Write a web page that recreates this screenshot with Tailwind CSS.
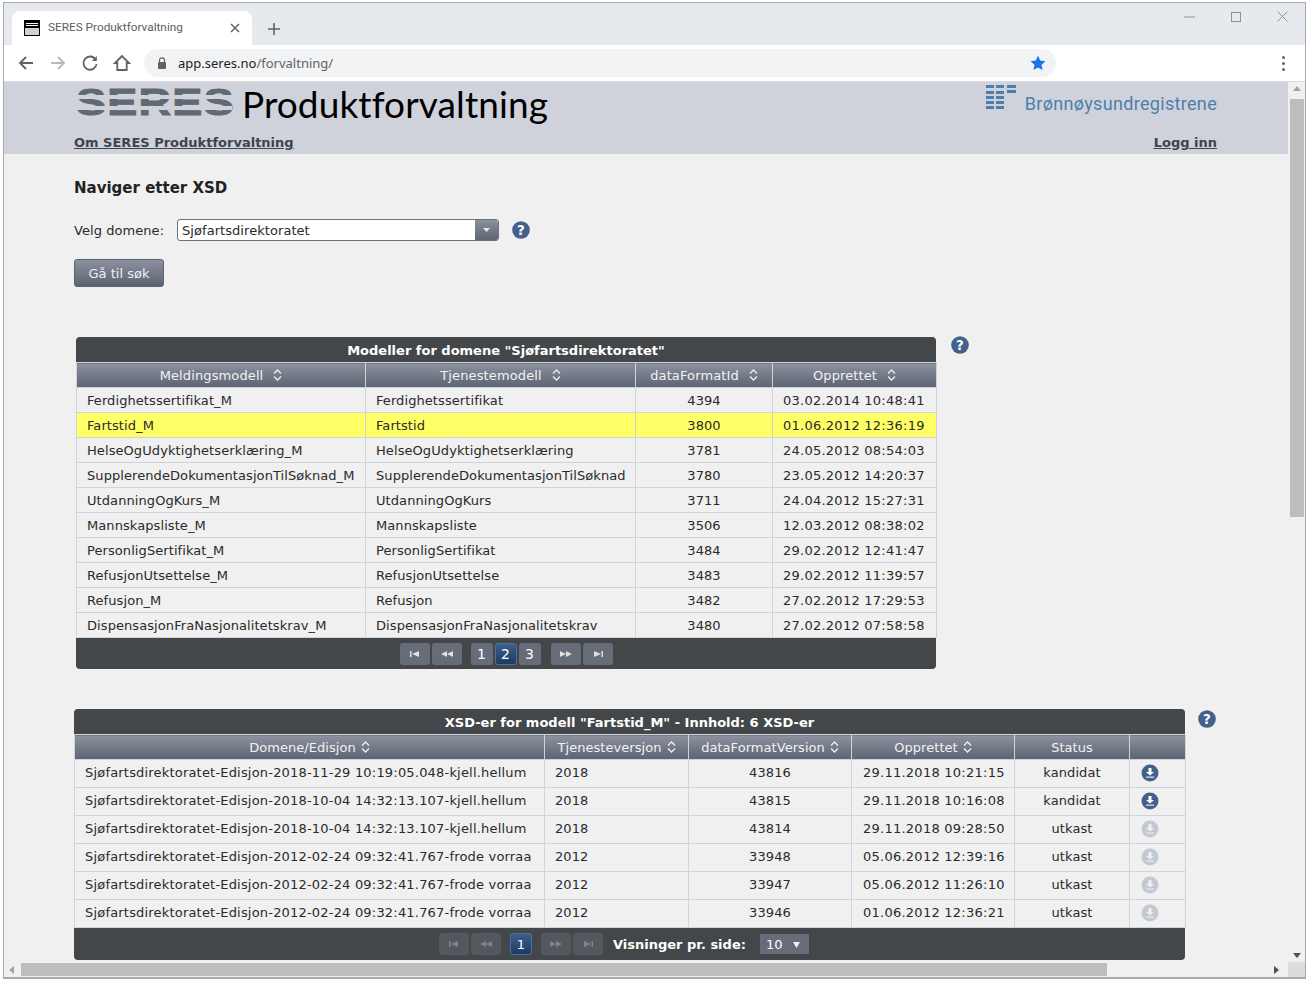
<!DOCTYPE html>
<html lang="no"><head><meta charset="utf-8"><title>SERES Produktforvaltning</title>
<script src="https://cdn.jsdelivr.net/npm/@tailwindcss/browser@4"></script></head>
<body class="w-[1306px] h-[981px] overflow-hidden bg-white font-['DejaVu_Sans',sans-serif] text-[13px] text-[#2a2a2a]">
<div class="ml-[3px] mt-[2px] w-[1303px] h-[977px] border-t-[1px] border-l-[1px] border-r-[1px] border-b-[2px] border-[#a9a9a9] flex flex-col overflow-hidden">
  <!-- tab strip -->
  <div class="h-[42px] shrink-0 bg-[#e6e9ed] flex items-end pl-[8px] relative">
    <div class="w-[240px] h-[34px] bg-white rounded-t-[8px] flex items-center pl-[12px] pr-[12px] font-['Roboto',sans-serif] text-[11.8px] text-[#5b5e63]">
      <div class="w-[16px] h-[16px] border border-black bg-[#cfcfcf] shrink-0 mr-[8px] flex flex-col gap-[1px] bg-linear-to-b from-black from-50% to-[#cfcfcf] to-50%"><i class="block mt-[2px] mx-[1px] h-[1px] bg-white"></i><i class="block mx-[1px] h-[1px] bg-white"></i></div>
      <span class="flex-1 whitespace-nowrap">SERES Produktforvaltning</span>
      <svg width="10" height="10" viewBox="0 0 10 10" class="shrink-0"><path d="M1 1l8 8M9 1l-8 8" stroke="#5f6368" stroke-width="1.5"/></svg>
    </div>
    <svg width="12" height="12" viewBox="0 0 12 12" class="ml-[16px] mb-[10px]"><path d="M6 0v12M0 6h12" stroke="#5f6368" stroke-width="1.6"/></svg>
    <div class="absolute right-[17px] top-[8px] flex items-center gap-[36px]">
      <svg width="11" height="11" viewBox="0 0 11 11"><path d="M0 6h11" stroke="#8f9194"/></svg>
      <svg width="10" height="10" viewBox="0 0 10 10"><rect x=".5" y=".5" width="9" height="9" fill="none" stroke="#8f9194"/></svg>
      <svg width="11" height="11" viewBox="0 0 11 11"><path d="M.5.5l10 10M10.5.5l-10 10" stroke="#8f9194"/></svg>
    </div>
  </div>
  <!-- toolbar -->
  <div class="h-[37px] shrink-0 bg-white border-b border-[#dadce0] flex items-center pl-[13px] pr-[20px]">
    <svg width="18" height="18" viewBox="0 0 18 18"><path d="M16 9H3M9 3L3 9l6 6" fill="none" stroke="#5f6368" stroke-width="1.8"/></svg>
    <svg width="18" height="18" viewBox="0 0 18 18" class="ml-[14px]"><path d="M2 9h13M9 3l6 6-6 6" fill="none" stroke="#b6b8bb" stroke-width="1.8"/></svg>
    <svg width="18" height="18" viewBox="0 0 18 18" class="ml-[14px]"><path d="M14.6 5.5A6.6 6.6 0 1 0 15.6 10" fill="none" stroke="#5f6368" stroke-width="1.8"/><path d="M15.8 2v5h-5z" fill="#5f6368"/></svg>
    <svg width="18" height="18" viewBox="0 0 18 18" class="ml-[14px]"><path d="M9 2L2 9h2.300v7h9.400V9H16z" fill="none" stroke="#5f6368" stroke-width="1.800"/></svg>
    <div class="ml-[13px] w-[912px] h-[28px] rounded-full bg-[#f1f3f4] flex items-center pl-[13px] pr-[10px] font-['Noto_Sans',sans-serif] text-[13px] text-[#202124]">
      <svg width="10" height="12" viewBox="0 0 10 12"><path d="M2.500 5V3.300a2.500 2.500 0 0 1 5 0V5" fill="none" stroke="#5f6368" stroke-width="1.200"/><rect x="1" y="5" width="8" height="7" rx="1" fill="#5f6368"/></svg>
      <span class="ml-[11px] flex-1 pt-[1px]">app.seres.no<span class="text-[#5f6368]">/forvaltning/</span></span>
      <svg width="16" height="16" viewBox="0 0 16 16"><path d="M8 .7l2.200 4.900 5.300.6-4 3.600 1.100 5.300L8 12.400l-4.600 2.700 1.100-5.300-4-3.600 5.300-.6z" fill="#1a73e8"/></svg>
    </div>
    <div class="ml-auto flex flex-col gap-[3px]"><i class="block w-[3px] h-[3px] rounded-full bg-[#5f6368]"></i><i class="block w-[3px] h-[3px] rounded-full bg-[#5f6368]"></i><i class="block w-[3px] h-[3px] rounded-full bg-[#5f6368]"></i></div>
  </div>
  <!-- viewport -->
  <div class="flex-1 min-h-0 flex flex-col bg-[#f0f0f0]">
    <div class="flex-1 min-h-0 flex">
      <div class="flex-1 min-w-0 overflow-hidden">
        <!-- page header -->
        <header class="h-[72px] bg-[#cfd2da] pl-[70px] pr-[71px] flex flex-col">
          <div class="h-[53px] flex">
            <div class="relative h-[27px] mt-[7px] ml-[2px] w-[156px]">
              <span class="block font-['Liberation_Sans',sans-serif] font-bold text-[36px] leading-[27px] text-[#5f6a73] [-webkit-text-stroke:1px_#5f6a73] origin-left scale-x-[1.25] tracking-[1px] whitespace-nowrap">SERES</span>
              <i class="absolute left-0 right-0 top-[6px] h-[4px] bg-[#cfd2da]"></i>
              <i class="absolute left-0 right-0 top-[17px] h-[4px] bg-[#cfd2da]"></i>
            </div>
            <span class="ml-[10px] font-['Lato',sans-serif] text-[37px] tracking-[0.1px] leading-[44px] text-black whitespace-nowrap">Produktforvaltning</span>
            <div class="ml-auto flex items-start">
              <svg width="30" height="25" viewBox="0 0 30 25" class="mt-[3px]" fill="#4d7fac"><rect x="0" y="0" width="8" height="3"/><rect x="10" y="0" width="8" height="3"/><rect x="21" y="0" width="9" height="3"/><rect x="0" y="6" width="8" height="3"/><rect x="10" y="6" width="8" height="3"/><rect x="21" y="5" width="9" height="3"/><rect x="0" y="11" width="8" height="3"/><rect x="10" y="11" width="8" height="3"/><rect x="0" y="16" width="8" height="3"/><rect x="10" y="16" width="8" height="3"/><rect x="0" y="21" width="8" height="3"/><rect x="10" y="21" width="8" height="3"/></svg>
              <span class="ml-[9px] mt-[12px] font-['Roboto',sans-serif] text-[18px] leading-[20px] tracking-[0.32px] text-[#4d7fac]">Brønnøysundregistrene</span>
            </div>
          </div>
          <div class="flex justify-between font-bold text-[13px] leading-[16px] text-[#40444c] underline"><a>Om SERES Produktforvaltning</a><a>Logg inn</a></div>
        </header>
        <main class="pl-[70px]">
          <h1 class="pt-[25px] font-bold text-[15px] leading-[18px] text-[#222]">Naviger etter XSD</h1>
          <div class="mt-[22px] flex items-center h-[22px]">
            <label class="w-[103px] pt-[2px] tracking-[0.06px]">Velg domene:</label>
            <div class="w-[322px] h-[22px] bg-white border border-[#6b7280] rounded-[3px] flex items-center pl-[4px] overflow-hidden">
              <span class="flex-1 pt-[2px] tracking-[0.06px]">Sjøfartsdirektoratet</span>
              <span class="w-[23px] h-[22px] bg-linear-to-b from-[#8c929e] to-[#5c6372] flex items-center justify-center"><svg width="7" height="4" viewBox="0 0 7 4"><path d="M0 0h7L3.500 4z" fill="#e8e8e8"/></svg></span>
            </div>
            <svg width="18" height="18" viewBox="0 0 20 20" class="ml-[13px]"><circle cx="10" cy="10" r="9.800" fill="#44618c"/><text x="10" y="15.500" text-anchor="middle" font-family="DejaVu Sans" font-weight="700" font-size="15" fill="#fff">?</text></svg>
          </div>
          <button class="mt-[18px] block w-[90px] h-[28px] pt-[2px] rounded-[3px] border border-[#5c6372] bg-linear-to-b from-[#8c929e] to-[#5c6372] text-[#f0f0f0] text-[13px]">Gå til søk</button>

          <!-- table 1 -->
          <div class="mt-[50px] ml-[2px] flex items-start">
            <div class="w-[860px] shrink-0">
              <div class="h-[25px] pt-[2px] bg-[#43474a] rounded-t-[4px] text-white font-bold flex items-center justify-center">Modeller for domene "Sjøfartsdirektoratet"</div>
              <table class="w-[860px] table-fixed border-collapse [&_th]:h-[25px] [&_th]:pt-[2px] [&_th]:tracking-[0.12px] [&_th]:font-normal [&_th]:text-[#f2f2f2] [&_th]:bg-linear-to-b [&_th]:from-[#8c929e] [&_th]:to-[#5c6372] [&_th]:border [&_th]:border-[#d0d3db] [&_td]:h-[25px] [&_td]:p-0 [&_td]:pl-[10px] [&_td]:pt-[2px] [&_td]:tracking-[0.08px] [&_td]:border [&_td]:border-[#d0d3db] [&_td]:whitespace-nowrap">
                <colgroup><col class="w-[289px]"><col class="w-[270px]"><col class="w-[137px]"><col class="w-[164px]"></colgroup>
                <thead><tr>
                  <th>Meldingsmodell<svg width="9" height="12" viewBox="0 0 9 12" class="inline ml-[10px] align-[-1px]"><path d="M1 4.500L4.500 1 8 4.500M1 7.500L4.500 11 8 7.500" fill="none" stroke="#f0f0f0" stroke-width="1.300"/></svg></th>
                  <th>Tjenestemodell<svg width="9" height="12" viewBox="0 0 9 12" class="inline ml-[10px] align-[-1px]"><path d="M1 4.500L4.500 1 8 4.500M1 7.500L4.500 11 8 7.500" fill="none" stroke="#f0f0f0" stroke-width="1.300"/></svg></th>
                  <th>dataFormatId<svg width="9" height="12" viewBox="0 0 9 12" class="inline ml-[10px] align-[-1px]"><path d="M1 4.500L4.500 1 8 4.500M1 7.500L4.500 11 8 7.500" fill="none" stroke="#f0f0f0" stroke-width="1.300"/></svg></th>
                  <th>Opprettet<svg width="9" height="12" viewBox="0 0 9 12" class="inline ml-[10px] align-[-1px]"><path d="M1 4.500L4.500 1 8 4.500M1 7.500L4.500 11 8 7.500" fill="none" stroke="#f0f0f0" stroke-width="1.300"/></svg></th>
                </tr></thead>
                <tbody class="[&_td:nth-child(3)]:text-center [&_td:nth-child(3)]:pl-0 [&_td:nth-child(4)]:tracking-[0.25px]">
                  <tr><td>Ferdighetssertifikat_M</td><td>Ferdighetssertifikat</td><td>4394</td><td>03.02.2014 10:48:41</td></tr>
                  <tr class="bg-[#ffff66]"><td>Fartstid_M</td><td>Fartstid</td><td>3800</td><td>01.06.2012 12:36:19</td></tr>
                  <tr><td>HelseOgUdyktighetserklæring_M</td><td>HelseOgUdyktighetserklæring</td><td>3781</td><td>24.05.2012 08:54:03</td></tr>
                  <tr><td>SupplerendeDokumentasjonTilSøknad_M</td><td>SupplerendeDokumentasjonTilSøknad</td><td>3780</td><td>23.05.2012 14:20:37</td></tr>
                  <tr><td>UtdanningOgKurs_M</td><td>UtdanningOgKurs</td><td>3711</td><td>24.04.2012 15:27:31</td></tr>
                  <tr><td>Mannskapsliste_M</td><td>Mannskapsliste</td><td>3506</td><td>12.03.2012 08:38:02</td></tr>
                  <tr><td>PersonligSertifikat_M</td><td>PersonligSertifikat</td><td>3484</td><td>29.02.2012 12:41:47</td></tr>
                  <tr><td>RefusjonUtsettelse_M</td><td>RefusjonUtsettelse</td><td>3483</td><td>29.02.2012 11:39:57</td></tr>
                  <tr><td>Refusjon_M</td><td>Refusjon</td><td>3482</td><td>27.02.2012 17:29:53</td></tr>
                  <tr><td>DispensasjonFraNasjonalitetskrav_M</td><td>DispensasjonFraNasjonalitetskrav</td><td>3480</td><td>27.02.2012 07:58:58</td></tr>
                </tbody>
              </table>
              <div class="h-[31px] bg-[#43474a] rounded-b-[4px] flex items-center justify-center text-white text-[14px]">
                <span class="w-[30px] h-[22px] rounded-[3px] bg-[#666c78] flex items-center justify-center"><svg width="10" height="6" viewBox="0 0 10 6" fill="#e0e0e0"><rect width="1.500" height="6"/><path d="M2 3l7-3v6z"/></svg></span>
                <span class="ml-[2px] w-[30px] h-[22px] rounded-[3px] bg-[#666c78] flex items-center justify-center"><svg width="12" height="6" viewBox="0 0 12 6" fill="#e0e0e0"><path d="M0 3l6-3v6zM6 3l6-3v6z"/></svg></span>
                <span class="ml-[9px] w-[22px] h-[22px] pt-[1px] rounded-[3px] bg-[#666c78] flex items-center justify-center">1</span>
                <span class="ml-[2px] w-[22px] h-[22px] pt-[1px] rounded-[3px] bg-linear-to-b from-[#3d5f8c] to-[#1d3a66] border border-[#4d6f9c] flex items-center justify-center">2</span>
                <span class="ml-[2px] w-[22px] h-[22px] pt-[1px] rounded-[3px] bg-[#666c78] flex items-center justify-center">3</span>
                <span class="ml-[10px] w-[30px] h-[22px] rounded-[3px] bg-[#666c78] flex items-center justify-center"><svg width="12" height="6" viewBox="0 0 12 6" fill="#e0e0e0"><path d="M6 3L0 0v6zM12 3L6 0v6z"/></svg></span>
                <span class="ml-[2px] w-[30px] h-[22px] rounded-[3px] bg-[#666c78] flex items-center justify-center"><svg width="10" height="6" viewBox="0 0 10 6" fill="#e0e0e0"><path d="M8 3L1 0v6z"/><rect x="8.500" width="1.500" height="6"/></svg></span>
              </div>
            </div>
            <svg width="18" height="18" viewBox="0 0 20 20" class="ml-[15px] -mt-[1px]"><circle cx="10" cy="10" r="9.800" fill="#44618c"/><text x="10" y="15.500" text-anchor="middle" font-family="DejaVu Sans" font-weight="700" font-size="15" fill="#fff">?</text></svg>
          </div>

          <!-- table 2 -->
          <div class="mt-[40px] flex items-start">
            <div class="w-[1111px] shrink-0">
              <div class="h-[25px] pt-[2px] bg-[#43474a] rounded-t-[4px] text-white font-bold flex items-center justify-center">XSD-er for modell "Fartstid_M" - Innhold: 6 XSD-er</div>
              <table class="w-[1111px] table-fixed border-collapse [&_th]:h-[25px] [&_th]:pt-[2px] [&_th]:tracking-[0.05px] [&_th]:font-normal [&_th]:text-[#f2f2f2] [&_th]:bg-linear-to-b [&_th]:from-[#8c929e] [&_th]:to-[#5c6372] [&_th]:border [&_th]:border-[#d0d3db] [&_td]:h-[28px] [&_td]:p-0 [&_td]:pl-[10px] [&_td]:pb-[2px] [&_td]:tracking-[0.08px] [&_td]:border [&_td]:border-[#d0d3db] [&_td]:whitespace-nowrap">
                <colgroup><col class="w-[470px]"><col class="w-[144px]"><col class="w-[163px]"><col class="w-[163px]"><col class="w-[115px]"><col class="w-[56px]"></colgroup>
                <thead><tr>
                  <th>Domene/Edisjon<svg width="9" height="12" viewBox="0 0 9 12" class="inline ml-[5px] align-[-1px]"><path d="M1 4.500L4.500 1 8 4.500M1 7.500L4.500 11 8 7.500" fill="none" stroke="#f0f0f0" stroke-width="1.300"/></svg></th>
                  <th>Tjenesteversjon<svg width="9" height="12" viewBox="0 0 9 12" class="inline ml-[5px] align-[-1px]"><path d="M1 4.500L4.500 1 8 4.500M1 7.500L4.500 11 8 7.500" fill="none" stroke="#f0f0f0" stroke-width="1.300"/></svg></th>
                  <th>dataFormatVersion<svg width="9" height="12" viewBox="0 0 9 12" class="inline ml-[5px] align-[-1px]"><path d="M1 4.500L4.500 1 8 4.500M1 7.500L4.500 11 8 7.500" fill="none" stroke="#f0f0f0" stroke-width="1.300"/></svg></th>
                  <th>Opprettet<svg width="9" height="12" viewBox="0 0 9 12" class="inline ml-[5px] align-[-1px]"><path d="M1 4.500L4.500 1 8 4.500M1 7.500L4.500 11 8 7.500" fill="none" stroke="#f0f0f0" stroke-width="1.300"/></svg></th>
                  <th>Status</th><th></th>
                </tr></thead>
                <tbody class="[&_td:nth-child(1)]:tracking-[0.19px] [&_td:nth-child(4)]:tracking-[0.25px] [&_td:nth-child(4)]:pl-[11px] [&_td:nth-child(3)]:text-center [&_td:nth-child(3)]:pl-0 [&_td:nth-child(5)]:text-center [&_td:nth-child(5)]:pl-0 [&_td:nth-child(6)]:pl-[11px] [&_td:nth-child(6)]:pb-[1px]">
                  <tr><td>Sjøfartsdirektoratet-Edisjon-2018-11-29 10:19:05.048-kjell.hellum</td><td>2018</td><td>43816</td><td>29.11.2018 10:21:15</td><td>kandidat</td><td><svg width="18" height="18" viewBox="0 0 18 18"><circle cx="9" cy="9" r="8.500" fill="#44618c"/><path d="M7.500 4h3v4h2.500L9 11.500 5 8h2.500z" fill="#fff"/><rect x="5" y="12.500" width="8" height="1.300" fill="#cfe0f0"/></svg></td></tr>
                  <tr><td>Sjøfartsdirektoratet-Edisjon-2018-10-04 14:32:13.107-kjell.hellum</td><td>2018</td><td>43815</td><td>29.11.2018 10:16:08</td><td>kandidat</td><td><svg width="18" height="18" viewBox="0 0 18 18"><circle cx="9" cy="9" r="8.500" fill="#44618c"/><path d="M7.500 4h3v4h2.500L9 11.500 5 8h2.500z" fill="#fff"/><rect x="5" y="12.500" width="8" height="1.300" fill="#cfe0f0"/></svg></td></tr>
                  <tr><td>Sjøfartsdirektoratet-Edisjon-2018-10-04 14:32:13.107-kjell.hellum</td><td>2018</td><td>43814</td><td>29.11.2018 09:28:50</td><td>utkast</td><td><svg width="18" height="18" viewBox="0 0 18 18"><circle cx="9" cy="9" r="8.500" fill="#c2c9d3"/><path d="M7.500 4h3v4h2.500L9 11.500 5 8h2.500z" fill="#f0f0f0"/><rect x="5" y="12.500" width="8" height="1.300" fill="#e4e8ee"/></svg></td></tr>
                  <tr><td>Sjøfartsdirektoratet-Edisjon-2012-02-24 09:32:41.767-frode vorraa</td><td>2012</td><td>33948</td><td>05.06.2012 12:39:16</td><td>utkast</td><td><svg width="18" height="18" viewBox="0 0 18 18"><circle cx="9" cy="9" r="8.500" fill="#c2c9d3"/><path d="M7.500 4h3v4h2.500L9 11.500 5 8h2.500z" fill="#f0f0f0"/><rect x="5" y="12.500" width="8" height="1.300" fill="#e4e8ee"/></svg></td></tr>
                  <tr><td>Sjøfartsdirektoratet-Edisjon-2012-02-24 09:32:41.767-frode vorraa</td><td>2012</td><td>33947</td><td>05.06.2012 11:26:10</td><td>utkast</td><td><svg width="18" height="18" viewBox="0 0 18 18"><circle cx="9" cy="9" r="8.500" fill="#c2c9d3"/><path d="M7.500 4h3v4h2.500L9 11.500 5 8h2.500z" fill="#f0f0f0"/><rect x="5" y="12.500" width="8" height="1.300" fill="#e4e8ee"/></svg></td></tr>
                  <tr><td>Sjøfartsdirektoratet-Edisjon-2012-02-24 09:32:41.767-frode vorraa</td><td>2012</td><td>33946</td><td>01.06.2012 12:36:21</td><td>utkast</td><td><svg width="18" height="18" viewBox="0 0 18 18"><circle cx="9" cy="9" r="8.500" fill="#c2c9d3"/><path d="M7.500 4h3v4h2.500L9 11.500 5 8h2.500z" fill="#f0f0f0"/><rect x="5" y="12.500" width="8" height="1.300" fill="#e4e8ee"/></svg></td></tr>
                </tbody>
              </table>
              <div class="h-[32px] bg-[#43474a] rounded-b-[4px] flex items-center pl-[365px] text-white">
                <span class="w-[30px] h-[22px] rounded-[3px] bg-[#53575e] flex items-center justify-center"><svg width="10" height="6" viewBox="0 0 10 6" fill="#80848a"><rect width="1.500" height="6"/><path d="M2 3l7-3v6z"/></svg></span>
                <span class="ml-[2px] w-[30px] h-[22px] rounded-[3px] bg-[#53575e] flex items-center justify-center"><svg width="12" height="6" viewBox="0 0 12 6" fill="#80848a"><path d="M0 3l6-3v6zM6 3l6-3v6z"/></svg></span>
                <span class="ml-[9px] w-[22px] h-[22px] rounded-[3px] pt-[1px] bg-linear-to-b from-[#3d5f8c] to-[#1d3a66] border border-[#4d6f9c] flex items-center justify-center">1</span>
                <span class="ml-[9px] w-[30px] h-[22px] rounded-[3px] bg-[#53575e] flex items-center justify-center"><svg width="12" height="6" viewBox="0 0 12 6" fill="#80848a"><path d="M6 3L0 0v6zM12 3L6 0v6z"/></svg></span>
                <span class="ml-[2px] w-[30px] h-[22px] rounded-[3px] bg-[#53575e] flex items-center justify-center"><svg width="10" height="6" viewBox="0 0 10 6" fill="#80848a"><path d="M8 3L1 0v6z"/><rect x="8.500" width="1.500" height="6"/></svg></span>
                <span class="ml-[10px] pt-[1px] font-bold">Visninger pr. side:</span>
                <span class="ml-[14px] w-[49px] h-[20px] pt-[1px] bg-[#666c78] flex items-center pl-[6px] pr-[9px] justify-between">10<svg width="7" height="6" viewBox="0 0 7 6"><path d="M0 0h7L3.500 6z" fill="#f0f0f0"/></svg></span>
              </div>
            </div>
            <svg width="18" height="18" viewBox="0 0 20 20" class="ml-[13px] mt-[1px]"><circle cx="10" cy="10" r="9.800" fill="#44618c"/><text x="10" y="15.500" text-anchor="middle" font-family="DejaVu Sans" font-weight="700" font-size="15" fill="#fff">?</text></svg>
          </div>
        </main>
      </div>
      <!-- vertical scrollbar -->
      <div class="w-[17px] shrink-0 bg-[#f0f0f0] flex flex-col items-center pt-[4px] pb-[4px]">
        <svg width="8" height="5" viewBox="0 0 8 5"><path d="M4 0l4 5H0z" fill="#a3a3a3"/></svg>
        <div class="mt-[8px] w-[14px] h-[418px] bg-[#bdbdbd]"></div>
        <svg width="8" height="5" viewBox="0 0 8 5" class="mt-auto"><path d="M0 0h8L4 5z" fill="#505050"/></svg>
      </div>
    </div>
    <!-- horizontal scrollbar -->
    <div class="h-[15px] shrink-0 bg-[#f0f0f0] flex items-center pl-[5px]">
      <svg width="5" height="8" viewBox="0 0 5 8"><path d="M0 4l5-4v8z" fill="#a3a3a3"/></svg>
      <div class="ml-[7px] w-[1086px] h-[13px] bg-[#bdbdbd]"></div>
      <svg width="5" height="8" viewBox="0 0 5 8" class="ml-[167px]"><path d="M5 4L0 0v8z" fill="#505050"/></svg>
      <div class="ml-auto w-[17px] h-[15px] bg-[#dcdcdc]"></div>
    </div>
  </div>
</div>
</body></html>
